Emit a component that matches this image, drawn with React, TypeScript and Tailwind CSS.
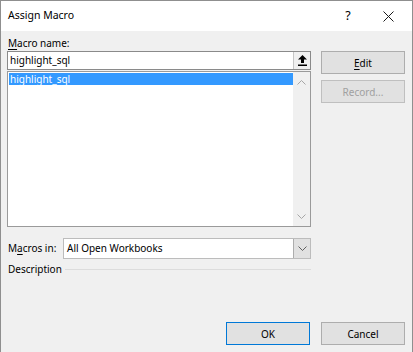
import React from 'react';

const font = { fontFamily: '"Noto Sans", "Open Sans", Arial, sans-serif' };

function Chevron({ up = false }: { up?: boolean }) {
  return (
    <svg width="9" height="5" viewBox="0 0 9 5" className={up ? 'rotate-180' : ''}>
      <path d="M0.5 0.5 L4.5 4.5 L8.5 0.5" fill="none" stroke="#a6a6a6" strokeWidth="1" />
    </svg>
  );
}

function UploadArrow() {
  return (
    <svg width="9" height="11" viewBox="0 0 9 11">
      <path d="M4.5 0 L9 4.5 L6 4.5 L6 8 L3 8 L3 4.5 L0 4.5 Z" fill="#000" />
      <rect x="0" y="9.5" width="9" height="1.5" fill="#000" />
    </svg>
  );
}

function Button({ children, disabled, primary }: { children: React.ReactNode; disabled?: boolean; primary?: boolean }) {
  return (
    <button
      className={`w-[84px] h-[23px] flex items-center justify-center bg-[#e1e1e1] border text-[10px] leading-none whitespace-nowrap ${
        primary ? 'border-[#0078d7]' : 'border-[#adadad]'
      } ${disabled ? 'text-[#a0a0a0] border-[#bfbfbf] bg-[#cccccc]/40' : 'text-black'}`}
    >
      {children}
    </button>
  );
}

export default function App() {
  return (
    <div
      className="w-[413px] h-[352px] flex flex-col border border-b-0 border-[#8f8f8f] bg-[#f0f0f0] text-[10px] text-black select-none whitespace-nowrap"
      style={font}
    >
      {/* Title bar */}
      <div className="h-[30px] bg-white flex items-center pl-[7px]">
        <span className="text-[10.5px] flex-1">Assign Macro</span>
        <span className="w-[32px] text-center text-[12.5px]">?</span>
        <span className="w-[48px] flex justify-center">
          <svg width="11" height="11" viewBox="0 0 11 11">
            <path d="M0.5 0.5 L10.5 10.5 M10.5 0.5 L0.5 10.5" stroke="#1a1a1a" strokeWidth="1" />
          </svg>
        </span>
      </div>

      {/* Body */}
      <div className="flex-1 flex flex-col pl-[6px] pr-[7px]">
        <div className="flex gap-[10px]">
          {/* Left column */}
          <div className="w-[304px] flex flex-col">
            <div className="h-[16px] mt-[4px] leading-[16px] pl-[1px]">
              <span className="underline underline-offset-2">M</span>acro name:
            </div>
            <div className="h-[19px] bg-white border border-[#8a8a8a] flex items-stretch">
              <span className="flex-1 pl-[2px] leading-[17px]">highlight_sql</span>
              <span className="w-[17px] flex items-center justify-center bg-[#f0f0f0] border-l border-[#c6c6c6]">
                <UploadArrow />
              </span>
            </div>
            <div className="h-[156px] mt-[1px] bg-white border border-[#9a9a9a] flex">
              <div className="flex-1 pt-[1px] pl-[1px]">
                <div className="h-[12px] bg-[#3399ff] text-white leading-[12px] pl-[1px]">highlight_sql</div>
              </div>
              <div className="w-[17px] bg-[#f0f0f0] flex flex-col items-center justify-between pt-[8px] pb-[7px]">
                <Chevron up />
                <Chevron />
              </div>
            </div>

            <div className="flex items-center mt-[11px] h-[21px]">
              <span className="w-[56px] pl-[1px]">
                M<span className="underline underline-offset-2">a</span>cros in:
              </span>
              <div className="flex-1 h-[21px] bg-white border border-[#bcbcbc] flex">
                <span className="flex-1 pl-[3px] leading-[19px]">All Open Workbooks</span>
                <span className="w-[17px] bg-[#e1e1e1] border-l border-[#adadad] flex items-center justify-center">
                  <svg width="9" height="5" viewBox="0 0 9 5">
                    <path d="M0.5 0.5 L4.5 4.5 L8.5 0.5" fill="none" stroke="#606060" strokeWidth="1" />
                  </svg>
                </span>
              </div>
            </div>

            <div className="flex items-center mt-[2px] h-[16px]">
              <span className="pl-[1px] pr-[3px]">Description</span>
              <div className="flex-1 h-px bg-[#dcdcdc]" />
            </div>
          </div>

          {/* Right column */}
          <div className="w-[84px] flex flex-col gap-[6px] pt-[20px]">
            <Button>
              <span>
                <span className="underline underline-offset-2">E</span>dit
              </span>
            </Button>
            <Button disabled>Record...</Button>
          </div>
        </div>

        <div className="mt-auto mb-[7px] flex justify-end gap-[10px]">
          <div className="mr-[1px]">
            <Button primary>OK</Button>
          </div>
          <Button>Cancel</Button>
        </div>
      </div>
    </div>
  );
}
